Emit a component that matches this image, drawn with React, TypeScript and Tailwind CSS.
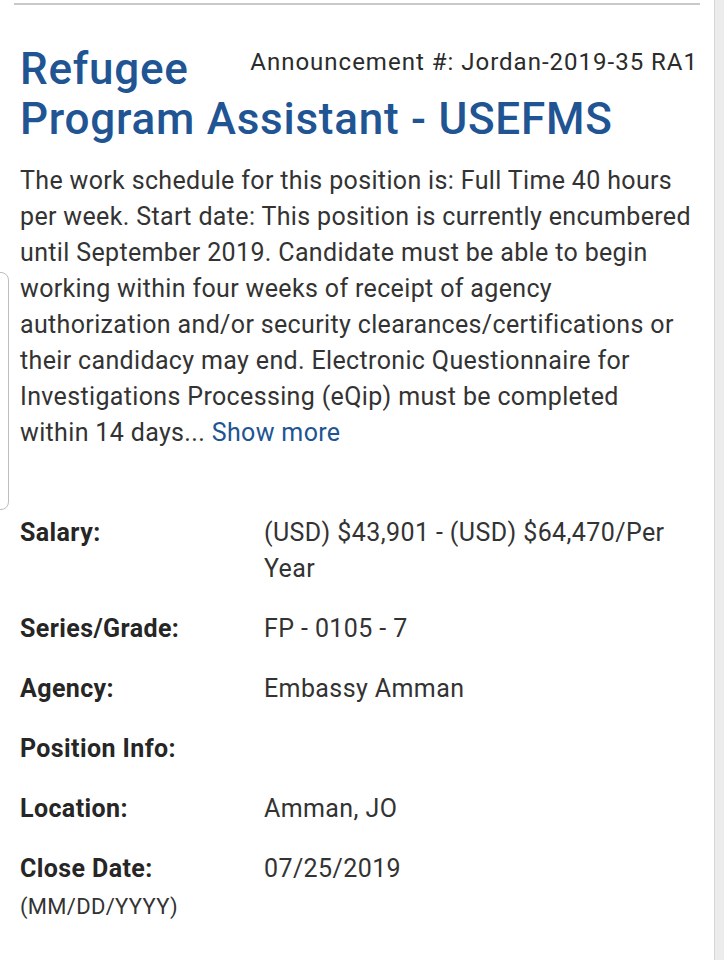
import React from "react";

const rows: { label: string; value: string; sub?: string }[] = [
  { label: "Salary:", value: "(USD) $43,901 - (USD) $64,470/Per Year" },
  { label: "Series/Grade:", value: "FP - 0105 - 7" },
  { label: "Agency:", value: "Embassy Amman" },
  { label: "Position Info:", value: "" },
  { label: "Location:", value: "Amman, JO" },
  { label: "Close Date:", value: "07/25/2019", sub: "(MM/DD/YYYY)" },
];

export default function App() {
  return (
    <div
      className="relative flex h-[960px] w-[724px] overflow-hidden bg-white"
      style={{ fontFamily: "Roboto, 'Noto Sans', sans-serif" }}
    >
      <div className="flex w-[714px] flex-col">
        <div className="mx-[14px] mt-[3px] h-[2px] bg-[#c9c9c9]" />
        <div className="pl-[20px] pr-[23px]">
          <div className="mt-[39px]">
            <div className="float-right mr-[-7px] mt-[3px] text-[24px] leading-[30px] tracking-[1px] text-[#2b2b2b]">
              Announcement #: Jordan-2019-35 RA1
            </div>
            <h1 className="text-[44px] font-medium leading-[50px] tracking-[0.75px] text-[#205493]">
              Refugee
              <br />
              Program Assistant - USEFMS
            </h1>
          </div>
          <p className="mt-[19px] text-[25px] leading-[36px] tracking-[0.35px] text-[#333333]">
            The work schedule for this position is: Full Time 40 hours per week. Start date: This
            position is currently encumbered until September 2019. Candidate must be able to begin
            working within four weeks of receipt of agency authorization and/or security
            clearances/certifications or their candidacy may end. Electronic Questionnaire for
            Investigations Processing (eQip) must be completed within 14 days...{" "}
            <span className="text-[#205493]">Show more</span>
          </p>
          <div className="mt-[64px] flex flex-col gap-[24px]">
            {rows.map((r) => (
              <div key={r.label} className="grid grid-cols-[244px_1fr]">
                <div>
                  <div className="text-[25px] font-bold leading-[36px] tracking-[0.4px] text-[#262626]">
                    {r.label}
                  </div>
                  {r.sub && (
                    <div className="text-[22px] leading-[40px] tracking-[0.3px] text-[#333333]">
                      {r.sub}
                    </div>
                  )}
                </div>
                <div className="text-[25px] leading-[36px] tracking-[0.4px] text-[#333333]">{r.value}</div>
              </div>
            ))}
          </div>
        </div>
      </div>
      <div className="w-[10px] border-l border-[#d6d6d6] bg-[#ececec]" />
      <div className="absolute left-[-20px] top-[272px] h-[238px] w-[29px] rounded-[8px] border border-[#bdbdbd]" />
    </div>
  );
}
